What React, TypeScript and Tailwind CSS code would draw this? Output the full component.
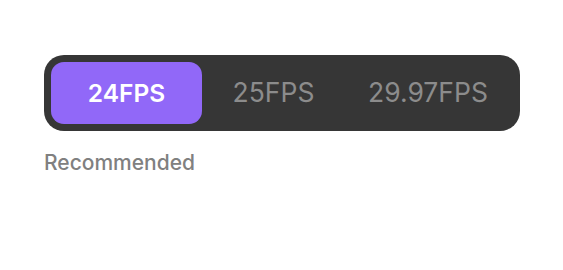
import React from "react";

export default function App() {
  return (
    <div className="w-[563px] h-[270px] bg-white pt-[55px] pl-[44px]" style={{ fontFamily: "Inter, 'Noto Sans', sans-serif" }}>
      <div className="flex w-[476px] h-[76px] rounded-[20px] bg-[#363636] p-[7px]">
        <div className="w-[151px] h-full rounded-[13px] bg-[#9168f8] flex items-center justify-center text-white text-[24.5px] font-semibold">
          24FPS
        </div>
        <div className="w-[143px] h-full flex items-center justify-center text-[#8c8c8c] text-[26.5px] font-normal">
          25FPS
        </div>
        <div className="w-[166px] h-full flex items-center justify-center text-[#8c8c8c] text-[26.5px] font-normal">
          29.97FPS
        </div>
      </div>
      <div className="mt-[21px] text-[21px] font-medium text-[#808080] leading-none">Recommended</div>
    </div>
  );
}
